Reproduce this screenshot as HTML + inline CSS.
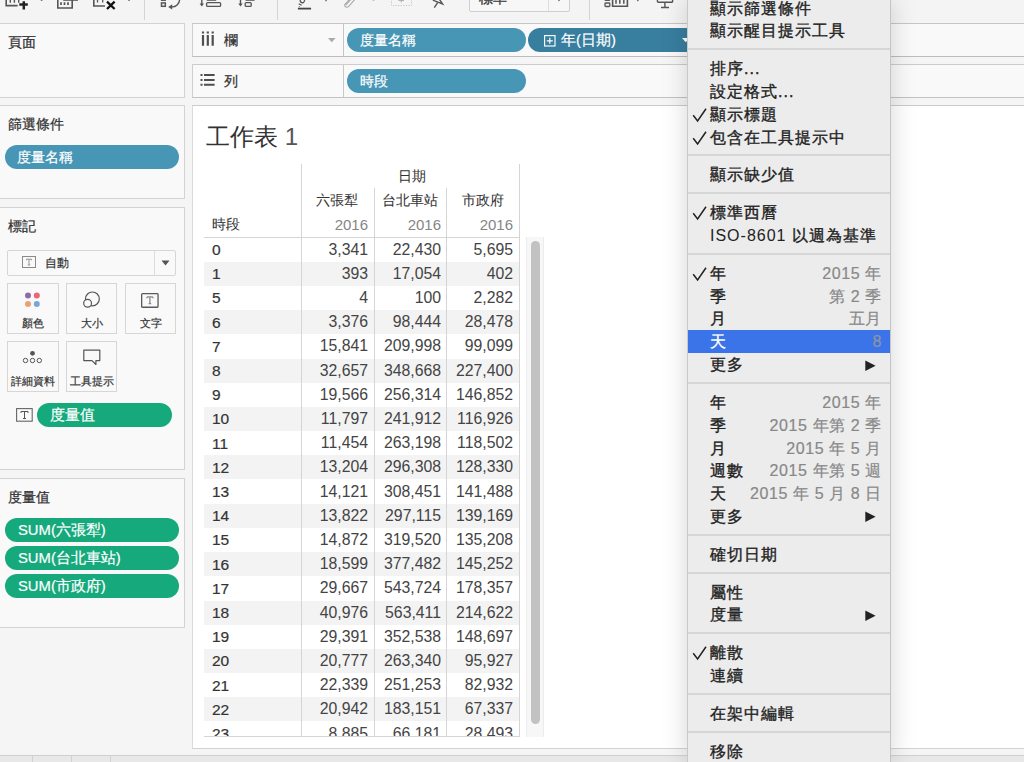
<!DOCTYPE html>
<html><head><meta charset="utf-8">
<style>
*{box-sizing:border-box}
html,body{margin:0;padding:0}
body{width:1024px;height:762px;overflow:hidden;position:relative;background:#f5f5f5;font-family:"Liberation Sans",sans-serif;color:#333}
.a{position:absolute}
svg{position:absolute;overflow:visible}
.panel{position:absolute;background:#f9f9f9;border:1px solid #d3d3d3}
.ptitle{position:absolute;left:7.5px;font-size:14.2px;color:#333;line-height:16px;white-space:nowrap;-webkit-text-stroke:0.25px #333}
.pill{position:absolute;height:24px;border-radius:12px;color:#fff;font-size:14.2px;line-height:24px;white-space:nowrap;-webkit-text-stroke:0.2px #fff}
.teal{background:#4896b5}
.green{background:#16a97c}
.card{position:absolute;border:1px solid #d6d6d6;background:#f9f9f9}
.card .lbl{position:absolute;left:0;right:0;top:32.8px;text-align:center;font-size:10.7px;line-height:12px;color:#333;white-space:nowrap;-webkit-text-stroke:0.2px #333}
.vl{position:absolute;width:1px;background:#d5d5d5}
.hl{position:absolute;height:1px;background:#d5d5d5}
.row{position:absolute;left:204px;width:315px;height:24.2px}
.row.b{background:#f3f3f3}
.rh{position:absolute;left:212px;line-height:24.2px;font-size:15.5px;color:#333;-webkit-text-stroke:0.2px #333}
.cell{position:absolute;width:80px;text-align:right;line-height:24.2px;font-size:15.8px;color:#444}
.hdr{position:absolute;font-size:14px;line-height:16px;color:#333;white-space:nowrap;-webkit-text-stroke:0.05px #333}
.yr{position:absolute;font-size:15px;line-height:16px;color:#858585;width:60px;text-align:right}
.menu{position:absolute;left:687px;top:0;width:204px;height:762px;background:#ececec;border-left:1px solid #c9c9c9;border-right:1px solid #c4c4c4;box-shadow:0 0 24px rgba(0,0,0,.17);overflow:hidden}
.mwrap{position:absolute;left:0;top:-2.5px;right:0}
.mi{position:relative;height:22.82px;line-height:22.82px;font-size:16px;color:#222;white-space:nowrap;letter-spacing:1px;-webkit-text-stroke:0.35px #222}
.mi .t{position:absolute;left:22px;top:0}
.mi .r{position:absolute;right:8px;top:0;color:#888;-webkit-text-stroke:0.2px #888;letter-spacing:0.6px}
.mi.hi{color:#fff;-webkit-text-stroke:0.35px #fff}
.mi.hi:before{content:"";position:absolute;left:0;right:0;top:-1.5px;height:23px;background:#3b73e8}
.mi.hi .r{color:#8c93a8;-webkit-text-stroke:0.2px #8c93a8}
.mi .arr{left:176.5px;top:5.5px}
.ms{position:relative;height:15px}
.ms:after{content:"";position:absolute;left:0;right:0;top:5px;height:2px;background:#d6d6d6}
.chk{left:4px;top:4px}

</style></head><body>
<!-- toolbar -->
<div class="a" style="left:0;top:0;width:1024px;height:23px;background:#f4f4f4"></div>
<svg style="left:0;top:0" width="690" height="22" viewBox="0 0 690 22">
 <g fill="none" stroke="#555" stroke-width="1.6">
  <path d="M6.2 -6 V5.6 H17.6"/>
  <path d="M10.3 -1 V2.8 M14.4 -1 V2.8 M18.7 -1 V2.8" stroke-width="1.4"/>
  <path d="M57.8 -6 V8 H72.2 V-6"/>
  <path d="M61 2.2 V4.9 M64.5 2.2 V4.9 M68 2.2 V4.9" stroke-width="1.7"/>
  <path d="M93.8 -6 V6 H105"/>
  <path d="M97.5 -1 V2.5 M102.7 -1 V2.5" stroke-width="1.3"/>
  <rect x="161.5" y="2.9" width="3.8" height="3.4" stroke-width="1.5"/>
  <rect x="161.5" y="-4" width="3.8" height="4.3" stroke-width="1.3"/>
  <path d="M179.6 -0.5 A7.6 7.6 0 0 1 171.5 6.9" stroke-width="1.4"/>
  <path d="M201.8 -2 V5" stroke-width="1.4"/>
  <rect x="206.6" y="2.6" width="14" height="3.8" rx="1" stroke-width="1.3"/>
  <path d="M240.5 -2 V5" stroke-width="1.4"/>
  <rect x="245.2" y="2.6" width="6" height="3.8" rx="1" stroke-width="1.3"/>
  <rect x="605" y="3" width="4.8" height="3.5" rx="0.8" stroke-width="1.3"/>
  <rect x="605" y="-4" width="4.8" height="4.4" rx="0.8" stroke-width="1.3"/>
  <path d="M612.6 -3 V6.3 H627.4 V-3"/>
  <path d="M616 -1 V3.8 M619.8 -1 V3.8 M623.8 -1 V3.8" stroke-width="1.5"/>
  <rect x="657.4" y="-6" width="15.2" height="8.2" rx="1" stroke-width="1.4"/>
  <path d="M664.9 2.2 V7.2 M661 7.5 H669" stroke-width="1.4"/>
  <path d="M300 -3 L300.3 1.2 Q301 3.2 303.4 2.6 Q304.6 2 305 -3" stroke-width="1.3"/>
  <path d="M298.7 3.7 L301.6 5.3" stroke-width="1.3"/>
  <circle cx="299.3" cy="6.6" r="0.5" fill="#555" stroke="none"/>
  <path d="M432.8 0.2 L442.6 4 L437.8 -3 M437.5 2.8 L434.3 7.6" stroke-width="1.4"/>
 </g>
 <path d="M19.3 4.4 H27.8 M23.8 1.2 V9.4" stroke="#222" stroke-width="2.5"/>
 <path d="M107 1.6 L114.6 9 M114.6 1.6 L107 9" stroke="#111" stroke-width="2.3"/>
 <path d="M63.2 -1 H78 V0.8 H63.2 Z" fill="#555"/>
 <path d="M168.2 6.9 L172.2 4.2 L172.2 9.5 Z" fill="#555"/>
 <path d="M199.6 3.6 H204 L201.8 6.4 Z M238.3 3.6 H242.7 L240.5 6.4 Z" fill="#555"/>
 <path d="M206.8 -1 H216.2 V0.9 H206.8 Z M245.5 -1 H254.6 V0.9 H245.5 Z" fill="#777"/>
 <path d="M297.9 7.7 H311.1 V9.5 H297.9 Z" fill="#444"/>
 <circle cx="41.6" cy="0.2" r="0.9" fill="#777"/>
 <circle cx="129" cy="0.2" r="0.9" fill="#777"/>
 <circle cx="326" cy="0.4" r="0.9" fill="#777"/>
 <circle cx="559" cy="0.3" r="0.9" fill="#777"/>
 <circle cx="637.8" cy="0.4" r="0.9" fill="#777"/>
 <circle cx="373.5" cy="0.2" r="0.9" fill="#bbb"/>
 <path d="M346 5 L352.5 -2.5 Q355 -4.5 356 -2 L349 6.2 Q346.5 8.2 345 6.2 Q344.2 4.8 345.5 3.8 L351.5 -3" fill="none" stroke="#aaa" stroke-width="1.1"/>
 <rect x="391.5" y="-4" width="20" height="9.5" fill="none" stroke="#c2c2c2" stroke-width="0.9" stroke-dasharray="1.3 1.3"/>
 <path d="M398.5 0.5 H404 M401.3 0.5 V2.5" stroke="#b0b0b0" stroke-width="1"/>
 <path d="M144.5 0 V20 M277.5 0 V20 M589.5 0 V20" stroke="#d4d4d4" stroke-width="1"/>
</svg>
<div class="a" style="left:469px;top:-12px;width:101px;height:24px;border:1px solid #cfcfcf;background:#f7f7f7;border-radius:2px"></div>
<div class="a" style="left:548px;top:-12px;width:1px;height:23px;background:#dedede"></div>
<div class="a" style="left:479px;top:-11px;font-size:14px;line-height:18px;color:#333;-webkit-text-stroke:0.3px #333">標準</div>
<svg style="left:0;top:0" width="690" height="22"><circle cx="559" cy="0.3" r="0.9" fill="#777"/></svg>

<!-- left panels -->
<div class="panel" style="left:-1px;top:23px;width:186px;height:75px"><div class="ptitle" style="top:10px">頁面</div></div>
<div class="panel" style="left:-1px;top:105px;width:186px;height:94px">
  <div class="ptitle" style="top:10px">篩選條件</div>
  <div class="pill teal" style="left:5px;top:39px;width:174px;padding-left:12px">度量名稱</div>
</div>
<div class="panel" style="left:-1px;top:207px;width:186px;height:263px">
  <div class="ptitle" style="top:10px">標記</div>
</div>
<!-- marks dropdown -->
<div class="a" style="left:7px;top:250px;width:169px;height:26px;border:1px solid #d6d6d6;background:#f9f9f9;border-radius:2px"></div>
<div class="a" style="left:154px;top:251px;width:1px;height:24px;background:#dddddd"></div>
<svg style="left:161px;top:260px" width="9" height="6" viewBox="0 0 9 6"><path d="M0.5 0.5 L8.5 0.5 L4.5 5.5 Z" fill="#555"/></svg>
<svg style="left:22px;top:256px" width="14" height="12" viewBox="0 0 14 12"><rect x="0.5" y="0.5" width="13" height="11" fill="none" stroke="#8a8a8a" stroke-width="1"/><path d="M4.5 3.2 H9.5 M7 3.2 V9 M5.8 9 H8.2 M4.5 3.2 V4.3 M9.5 3.2 V4.3" stroke="#888" stroke-width="0.9" fill="none"/></svg>
<div class="a" style="left:44.5px;top:254px;font-size:12px;line-height:18px;color:#333;-webkit-text-stroke:0.2px #333">自動</div>
<!-- cards -->
<div class="card" style="left:7px;top:283px;width:52px;height:51px"><div class="lbl">顏色</div></div>
<div class="card" style="left:66px;top:283px;width:51px;height:51px"><div class="lbl">大小</div></div>
<div class="card" style="left:125px;top:283px;width:51px;height:51px"><div class="lbl">文字</div></div>
<div class="card" style="left:7px;top:341px;width:52px;height:51px"><div class="lbl">詳細資料</div></div>
<div class="card" style="left:66px;top:341px;width:51px;height:51px"><div class="lbl">工具提示</div></div>
<svg style="left:24px;top:292px" width="16" height="16" viewBox="0 0 16 16"><circle cx="4" cy="3.5" r="3" fill="#8e6da6"/><circle cx="12.8" cy="3.5" r="3" fill="#e8677a"/><circle cx="4" cy="12" r="3" fill="#f0a070"/><circle cx="12.8" cy="12" r="3" fill="#7aa6d6"/></svg>
<svg style="left:82px;top:290px" width="20" height="18" viewBox="0 0 20 18"><circle cx="10.4" cy="8.9" r="6.9" fill="none" stroke="#555" stroke-width="1.2"/><circle cx="5.6" cy="13.3" r="3.9" fill="#f9f9f9" stroke="#555" stroke-width="1.2"/></svg>
<svg style="left:141px;top:292.5px" width="18" height="16" viewBox="0 0 18 16"><rect x="0.65" y="0.65" width="16.4" height="13.6" rx="0.8" fill="none" stroke="#5a5a5a" stroke-width="1.3"/><path d="M5.9 3.9 H11.9 M8.9 3.9 V10.6 M7.6 10.6 H10.2 M5.9 3.9 V5.2 M11.9 3.9 V5.2" stroke="#8a8a8a" stroke-width="1.3" fill="none"/></svg>
<svg style="left:22px;top:350px" width="20" height="14" viewBox="0 0 20 14"><circle cx="10.5" cy="3.3" r="2.4" fill="#555"/><circle cx="3.5" cy="10.5" r="2.2" fill="none" stroke="#555" stroke-width="1"/><circle cx="10.5" cy="10.5" r="2.2" fill="none" stroke="#555" stroke-width="1"/><circle cx="17.3" cy="10.5" r="2.2" fill="none" stroke="#555" stroke-width="1"/></svg>
<svg style="left:83px;top:349px" width="18" height="18" viewBox="0 0 18 18"><path d="M0.8 1.2 H16.8 V11.6 H12.9 V15.5 L9 11.6 H0.8 Z" fill="none" stroke="#555" stroke-width="1.2" stroke-linejoin="round"/></svg>
<svg style="left:16px;top:408px" width="17" height="14" viewBox="0 0 17 14"><rect x="0.6" y="0.6" width="15.6" height="12.6" fill="none" stroke="#666" stroke-width="1.1"/><path d="M5 3.5 H12 M8.5 3.5 V10.5 M7 10.5 H10 M5 3.5 V5 M12 3.5 V5" stroke="#555" stroke-width="1" fill="none"/></svg>
<div class="pill green" style="left:37px;top:403px;width:135px;padding-left:13px;font-size:14.6px">度量值</div>
<div class="panel" style="left:-1px;top:478px;width:186px;height:150px">
  <div class="ptitle" style="top:10px">度量值</div>
  <div class="pill green" style="left:5px;top:39px;width:174px;padding-left:13px;font-size:14.8px">SUM(六張犁)</div>
  <div class="pill green" style="left:5px;top:67px;width:174px;padding-left:13px;font-size:14.8px">SUM(台北車站)</div>
  <div class="pill green" style="left:5px;top:95px;width:174px;padding-left:13px;font-size:14.8px">SUM(市政府)</div>
</div>

<!-- shelves -->
<div class="panel" style="left:192px;top:23px;width:900px;height:34px;border-color:#c6c6c6 #c6c6c6 #bdbdbd #cfcfcf">
  <div class="a" style="left:150px;top:0;width:1px;height:32px;background:#c4c4c4"></div>
  <svg style="left:9px;top:7px" width="14" height="15" viewBox="0 0 14 15"><path d="M1 0.4 V2.6 M5.8 0.4 V2.6 M10.7 0.4 V2.6" stroke="#4f4f4f" stroke-width="2.2"/><path d="M1 4 V14.8 M5.8 4 V14.8 M10.7 4 V14.8" stroke="#4f4f4f" stroke-width="2.2"/></svg>
  <div class="ptitle" style="left:31px;top:8px">欄</div>
  <svg style="left:135px;top:13.5px" width="8" height="5" viewBox="0 0 8 5"><path d="M0 0 H7.5 L3.75 4.2 Z" fill="#aaa"/></svg>
  <div class="pill teal" style="left:154px;top:4px;width:179px;padding-left:13px">度量名稱</div>
  <div class="pill" style="left:335px;top:4px;width:175px;padding-left:33px;background:#387e9f;font-size:14.8px">年(日期)</div>
  <svg style="left:350.5px;top:10.7px" width="12" height="12" viewBox="0 0 12 12"><rect x="0.6" y="0.6" width="10.4" height="10.4" fill="none" stroke="#fff" stroke-width="1.15"/><path d="M5.8 2.8 V8.8 M2.8 5.8 H8.8" stroke="#fff" stroke-width="1.15"/></svg>
  <svg style="left:488.5px;top:14px" width="8" height="5" viewBox="0 0 8 5"><path d="M0 0 H7.5 L3.75 4.3 Z" fill="#fff"/></svg>
</div>
<div class="panel" style="left:192px;top:64px;width:900px;height:34px;border-color:#cccccc #c6c6c6 #c2c2c2 #cfcfcf">
  <div class="a" style="left:150px;top:0;width:1px;height:32px;background:#c8c8c8"></div>
  <svg style="left:7.2px;top:9px" width="16" height="13" viewBox="0 0 16 13"><path d="M0.5 1.1 H2.5 M0.5 6.0 H2.5 M0.5 10.8 H2.5" stroke="#4f4f4f" stroke-width="2"/><path d="M4.0 1.1 H14.6 M4.0 6.0 H14.6 M4.0 10.8 H14.6" stroke="#4f4f4f" stroke-width="2"/></svg>
  <div class="ptitle" style="left:31px;top:8px">列</div>
  <div class="pill teal" style="left:154px;top:4px;width:179px;padding-left:13px">時段</div>
</div>

<!-- worksheet -->
<div class="a" style="left:192px;top:105px;width:900px;height:644px;background:#fff;border:1px solid #d3d3d3;border-left-color:#dadada;border-top-color:#cbcbcb"></div>
<div class="a" style="left:206px;top:121px;font-size:24px;color:#333;white-space:nowrap">工作表 <span style="color:#555">1</span></div>
<div class="hdr" style="left:398px;top:168px">日期</div>
<div class="hdr" style="left:316px;top:192px">六張犁</div>
<div class="hdr" style="left:382px;top:192px">台北車站</div>
<div class="hdr" style="left:462px;top:192px">市政府</div>
<div class="hdr" style="left:212px;top:216px">時段</div>
<div class="yr" style="left:308px;top:217px">2016</div>
<div class="yr" style="left:381px;top:217px">2016</div>
<div class="yr" style="left:453px;top:217px">2016</div>
<div class="a" style="left:0;top:0;width:1024px;height:737px;overflow:hidden">
<div class="row" style="top:237.5px"></div>
<div class="rh" style="top:238.0px">0</div>
<div class="cell" style="left:288px;top:237.5px">3,341</div>
<div class="cell" style="left:361px;top:237.5px">22,430</div>
<div class="cell" style="left:433px;top:237.5px">5,695</div>
<div class="row b" style="top:261.7px"></div>
<div class="rh" style="top:262.2px">1</div>
<div class="cell" style="left:288px;top:261.7px">393</div>
<div class="cell" style="left:361px;top:261.7px">17,054</div>
<div class="cell" style="left:433px;top:261.7px">402</div>
<div class="row" style="top:285.9px"></div>
<div class="rh" style="top:286.4px">5</div>
<div class="cell" style="left:288px;top:285.9px">4</div>
<div class="cell" style="left:361px;top:285.9px">100</div>
<div class="cell" style="left:433px;top:285.9px">2,282</div>
<div class="row b" style="top:310.1px"></div>
<div class="rh" style="top:310.6px">6</div>
<div class="cell" style="left:288px;top:310.1px">3,376</div>
<div class="cell" style="left:361px;top:310.1px">98,444</div>
<div class="cell" style="left:433px;top:310.1px">28,478</div>
<div class="row" style="top:334.3px"></div>
<div class="rh" style="top:334.8px">7</div>
<div class="cell" style="left:288px;top:334.3px">15,841</div>
<div class="cell" style="left:361px;top:334.3px">209,998</div>
<div class="cell" style="left:433px;top:334.3px">99,099</div>
<div class="row b" style="top:358.5px"></div>
<div class="rh" style="top:359.0px">8</div>
<div class="cell" style="left:288px;top:358.5px">32,657</div>
<div class="cell" style="left:361px;top:358.5px">348,668</div>
<div class="cell" style="left:433px;top:358.5px">227,400</div>
<div class="row" style="top:382.7px"></div>
<div class="rh" style="top:383.2px">9</div>
<div class="cell" style="left:288px;top:382.7px">19,566</div>
<div class="cell" style="left:361px;top:382.7px">256,314</div>
<div class="cell" style="left:433px;top:382.7px">146,852</div>
<div class="row b" style="top:406.9px"></div>
<div class="rh" style="top:407.4px">10</div>
<div class="cell" style="left:288px;top:406.9px">11,797</div>
<div class="cell" style="left:361px;top:406.9px">241,912</div>
<div class="cell" style="left:433px;top:406.9px">116,926</div>
<div class="row" style="top:431.1px"></div>
<div class="rh" style="top:431.6px">11</div>
<div class="cell" style="left:288px;top:431.1px">11,454</div>
<div class="cell" style="left:361px;top:431.1px">263,198</div>
<div class="cell" style="left:433px;top:431.1px">118,502</div>
<div class="row b" style="top:455.3px"></div>
<div class="rh" style="top:455.8px">12</div>
<div class="cell" style="left:288px;top:455.3px">13,204</div>
<div class="cell" style="left:361px;top:455.3px">296,308</div>
<div class="cell" style="left:433px;top:455.3px">128,330</div>
<div class="row" style="top:479.5px"></div>
<div class="rh" style="top:480.0px">13</div>
<div class="cell" style="left:288px;top:479.5px">14,121</div>
<div class="cell" style="left:361px;top:479.5px">308,451</div>
<div class="cell" style="left:433px;top:479.5px">141,488</div>
<div class="row b" style="top:503.7px"></div>
<div class="rh" style="top:504.2px">14</div>
<div class="cell" style="left:288px;top:503.7px">13,822</div>
<div class="cell" style="left:361px;top:503.7px">297,115</div>
<div class="cell" style="left:433px;top:503.7px">139,169</div>
<div class="row" style="top:527.9px"></div>
<div class="rh" style="top:528.4px">15</div>
<div class="cell" style="left:288px;top:527.9px">14,872</div>
<div class="cell" style="left:361px;top:527.9px">319,520</div>
<div class="cell" style="left:433px;top:527.9px">135,208</div>
<div class="row b" style="top:552.1px"></div>
<div class="rh" style="top:552.6px">16</div>
<div class="cell" style="left:288px;top:552.1px">18,599</div>
<div class="cell" style="left:361px;top:552.1px">377,482</div>
<div class="cell" style="left:433px;top:552.1px">145,252</div>
<div class="row" style="top:576.3px"></div>
<div class="rh" style="top:576.8px">17</div>
<div class="cell" style="left:288px;top:576.3px">29,667</div>
<div class="cell" style="left:361px;top:576.3px">543,724</div>
<div class="cell" style="left:433px;top:576.3px">178,357</div>
<div class="row b" style="top:600.5px"></div>
<div class="rh" style="top:601.0px">18</div>
<div class="cell" style="left:288px;top:600.5px">40,976</div>
<div class="cell" style="left:361px;top:600.5px">563,411</div>
<div class="cell" style="left:433px;top:600.5px">214,622</div>
<div class="row" style="top:624.7px"></div>
<div class="rh" style="top:625.2px">19</div>
<div class="cell" style="left:288px;top:624.7px">29,391</div>
<div class="cell" style="left:361px;top:624.7px">352,538</div>
<div class="cell" style="left:433px;top:624.7px">148,697</div>
<div class="row b" style="top:648.9px"></div>
<div class="rh" style="top:649.4px">20</div>
<div class="cell" style="left:288px;top:648.9px">20,777</div>
<div class="cell" style="left:361px;top:648.9px">263,340</div>
<div class="cell" style="left:433px;top:648.9px">95,927</div>
<div class="row" style="top:673.1px"></div>
<div class="rh" style="top:673.6px">21</div>
<div class="cell" style="left:288px;top:673.1px">22,339</div>
<div class="cell" style="left:361px;top:673.1px">251,253</div>
<div class="cell" style="left:433px;top:673.1px">82,932</div>
<div class="row b" style="top:697.3px"></div>
<div class="rh" style="top:697.8px">22</div>
<div class="cell" style="left:288px;top:697.3px">20,942</div>
<div class="cell" style="left:361px;top:697.3px">183,151</div>
<div class="cell" style="left:433px;top:697.3px">67,337</div>
<div class="row" style="top:721.5px"></div>
<div class="rh" style="top:722.0px">23</div>
<div class="cell" style="left:288px;top:721.5px">8,885</div>
<div class="cell" style="left:361px;top:721.5px">66,181</div>
<div class="cell" style="left:433px;top:721.5px">28,493</div>
</div>
<div class="vl" style="left:301px;top:164px;height:573px"></div>
<div class="vl" style="left:374px;top:188px;height:549px"></div>
<div class="vl" style="left:446px;top:188px;height:549px"></div>
<div class="vl" style="left:519px;top:164px;height:573px"></div>
<div class="hl" style="left:204px;top:237px;width:315px"></div>
<div class="hl" style="left:204px;top:736px;width:315px"></div>
<!-- scrollbar -->
<div class="a" style="left:526px;top:237px;width:18px;height:500px;background:#f7f7f7;border-left:1px solid #ececec;border-right:1px solid #ececec"></div>
<div class="a" style="left:531px;top:241px;width:9px;height:483px;background:#c2c2c2;border-radius:5px"></div>

<!-- bottom strip -->
<div class="a" style="left:0;top:755px;width:1024px;height:7px;background:#e8e8e8;border-top:1px solid #d0d0d0"></div>
<div class="a" style="left:32px;top:756px;width:1px;height:6px;background:#d2d2d2"></div>
<div class="a" style="left:71px;top:756px;width:1px;height:6px;background:#d2d2d2"></div>
<div class="a" style="left:110px;top:756px;width:1px;height:6px;background:#d2d2d2"></div>

<div class="menu"><div class="mwrap">
<div class="mi"><span class="t">顯示篩選條件</span></div>
<div class="mi"><span class="t">顯示醒目提示工具</span></div>
<div class="ms"></div>
<div class="mi"><span class="t">排序...</span></div>
<div class="mi"><span class="t">設定格式...</span></div>
<div class="mi"><svg class="chk" width="15" height="15" viewBox="0 0 15 15"><path d="M1.2 7.2 L5.6 13 L14 0.8" fill="none" stroke="#222" stroke-width="1.5"/></svg><span class="t">顯示標題</span></div>
<div class="mi"><svg class="chk" width="15" height="15" viewBox="0 0 15 15"><path d="M1.2 7.2 L5.6 13 L14 0.8" fill="none" stroke="#222" stroke-width="1.5"/></svg><span class="t">包含在工具提示中</span></div>
<div class="ms"></div>
<div class="mi"><span class="t">顯示缺少值</span></div>
<div class="ms"></div>
<div class="mi"><svg class="chk" width="15" height="15" viewBox="0 0 15 15"><path d="M1.2 7.2 L5.6 13 L14 0.8" fill="none" stroke="#222" stroke-width="1.5"/></svg><span class="t">標準西曆</span></div>
<div class="mi"><span class="t"><span style="-webkit-text-stroke:0">ISO-8601</span> 以週為基準</span></div>
<div class="ms"></div>
<div class="mi"><svg class="chk" width="15" height="15" viewBox="0 0 15 15"><path d="M1.2 7.2 L5.6 13 L14 0.8" fill="none" stroke="#222" stroke-width="1.5"/></svg><span class="t">年</span><span class="r">2015 年</span></div>
<div class="mi"><span class="t">季</span><span class="r">第 2 季</span></div>
<div class="mi"><span class="t">月</span><span class="r">五月</span></div>
<div class="mi hi"><span class="t">天</span><span class="r">8</span></div>
<div class="mi"><span class="t">更多</span><svg class="arr" width="11" height="12" viewBox="0 0 11 12"><path d="M0.3 0.5 L10.6 5.8 L0.3 11 Z" fill="#222"/></svg></div>
<div class="ms"></div>
<div class="mi"><span class="t">年</span><span class="r">2015 年</span></div>
<div class="mi"><span class="t">季</span><span class="r">2015 年第 2 季</span></div>
<div class="mi"><span class="t">月</span><span class="r">2015 年 5 月</span></div>
<div class="mi"><span class="t">週數</span><span class="r">2015 年第 5 週</span></div>
<div class="mi"><span class="t">天</span><span class="r">2015 年 5 月 8 日</span></div>
<div class="mi"><span class="t">更多</span><svg class="arr" width="11" height="12" viewBox="0 0 11 12"><path d="M0.3 0.5 L10.6 5.8 L0.3 11 Z" fill="#222"/></svg></div>
<div class="ms"></div>
<div class="mi"><span class="t">確切日期</span></div>
<div class="ms"></div>
<div class="mi"><span class="t">屬性</span></div>
<div class="mi"><span class="t">度量</span><svg class="arr" width="11" height="12" viewBox="0 0 11 12"><path d="M0.3 0.5 L10.6 5.8 L0.3 11 Z" fill="#222"/></svg></div>
<div class="ms"></div>
<div class="mi"><svg class="chk" width="15" height="15" viewBox="0 0 15 15"><path d="M1.2 7.2 L5.6 13 L14 0.8" fill="none" stroke="#222" stroke-width="1.5"/></svg><span class="t">離散</span></div>
<div class="mi"><span class="t">連續</span></div>
<div class="ms"></div>
<div class="mi"><span class="t">在架中編輯</span></div>
<div class="ms"></div>
<div class="mi"><span class="t">移除</span></div>
</div></div>

</body></html>
